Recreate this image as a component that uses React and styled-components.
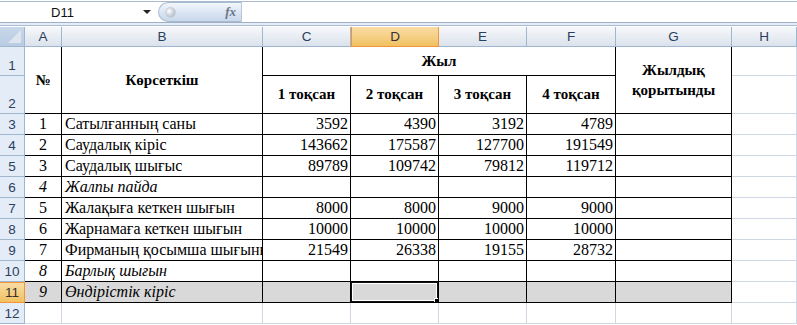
import React from "react";
import styled, { createGlobalStyle, css } from "styled-components";

const GlobalStyle = createGlobalStyle`
  html, body {
    margin: 0;
    padding: 0;
    background: #fff;
    overflow: hidden;
  }
  body {
    font-family: "Liberation Serif", "Times New Roman", serif;
  }
`;

const COLS = ["A", "B", "C", "D", "E", "F", "G", "H"];
const SELECTED_COL = "D";
const SELECTED_ROW = 11;

const ROWS = [
  { n: 1, no: "1", name: "Сатылғанның саны", v: [3592, 4390, 3192, 4789] },
  { n: 2, no: "2", name: "Саудалық кіріс", v: [143662, 175587, 127700, 191549] },
  { n: 3, no: "3", name: "Саудалық шығыс", v: [89789, 109742, 79812, 119712] },
  { n: 4, no: "4", name: "Жалпы пайда", italic: true },
  { n: 5, no: "5", name: "Жалақыға кеткен шығын", v: [8000, 8000, 9000, 9000] },
  { n: 6, no: "6", name: "Жарнамаға кеткен шығын", v: [10000, 10000, 10000, 10000] },
  { n: 7, no: "7", name: "Фирманың қосымша шығыны", v: [21549, 26338, 19155, 28732] },
  { n: 8, no: "8", name: "Барлық шығын", italic: true },
  { n: 9, no: "9", name: "Өндірістік кіріс", italic: true, fill: true },
];

const Page = styled.div`
  width: 797px;
  height: 325px;
  overflow: hidden;
  padding-top: 1px;
  box-sizing: border-box;
`;

const FormulaBar = styled.div`
  display: flex;
  height: 22px;
  border-top: 1px solid #a9bbd1;
  border-bottom: 1px solid #9cb0c9;
  box-sizing: border-box;
  background: #fff;
`;

const NameBox = styled.div`
  width: 158px;
  display: flex;
  align-items: center;
  font-family: "Liberation Sans", Arial, sans-serif;
  font-size: 13px;
  color: #111;
`;

const NameText = styled.span`
  flex: 1;
  text-align: center;
  padding-right: 18px;
`;

const DropArrow = styled.span`
  width: 0;
  height: 0;
  border-left: 4px solid transparent;
  border-right: 4px solid transparent;
  border-top: 4px solid #222;
  margin-right: 7px;
`;

const FxPill = styled.div`
  width: 84px;
  display: flex;
  align-items: center;
  justify-content: space-between;
  border-radius: 11px 0 0 11px;
  border: 1px solid #a9bccf;
  border-right: 1px solid #b9c8d9;
  background: linear-gradient(#f3f7fc, #d9e4f2 55%, #cad8eb);
  box-sizing: border-box;
  padding: 0 5px 0 6px;
`;

const Knob = styled.span`
  width: 9px;
  height: 9px;
  border-radius: 50%;
  background: radial-gradient(circle at 35% 35%, #ffffff, #b8c2cc 70%);
  border: 1px solid #c7d0da;
`;

const Fx = styled.span`
  font-family: "Liberation Serif", serif;
  font-style: italic;
  font-weight: bold;
  font-size: 13px;
  color: #6a7585;
`;

const FormulaInput = styled.div`
  flex: 1;
  background: #fff;
`;

const Strip = styled.div`
  height: 2px;
  background: #e6edf6;
  border-bottom: 1px solid #a8bbd3;
  margin-bottom: 1px;
`;

const Sheet = styled.div`
  display: grid;
  grid-template-columns: 25px 37px 201px 88px 88px 88px 89px 116px 65px 1fr;
  grid-template-rows: 20px 29px 38px repeat(10, 21px);
`;

const headerBase = css`
  box-sizing: border-box;
  font-family: "Liberation Sans", Arial, sans-serif;
  font-size: 13.5px;
  color: #2b3f5c;
  display: flex;
  justify-content: center;
`;

const ColHeader = styled.div`
  ${headerBase}
  align-items: center;
  border-right: 1px solid #9eb6ce;
  border-bottom: 1px solid #9eb6ce;
  background: linear-gradient(#f6f8fb, #e6ebf2 60%, #dbe2ec);
  ${(p) =>
    p.$active &&
    css`
      background: linear-gradient(#f9dca5, #f5cd7f 60%, #f1c15f);
      border: 1px solid #f29536;
      border-top-width: 0;
      color: #333;
    `}
`;

const Corner = styled.div`
  box-sizing: border-box;
  position: relative;
  border-right: 1px solid #9eb6ce;
  border-bottom: 1px solid #9eb6ce;
  background: linear-gradient(#c8d7ea, #b9cce4);
  overflow: hidden;
`;

const CornerTriangle = styled.span`
  position: absolute;
  right: 3px;
  bottom: 3px;
  width: 0;
  height: 0;
  border-left: 13px solid transparent;
  border-bottom: 13px solid #dfe5ee;
`;

const RowHeader = styled.div`
  ${headerBase}
  align-items: flex-end;
  padding-bottom: 2px;
  border-right: 1px solid #9eb6ce;
  border-bottom: 1px solid #9eb6ce;
  background: #e4ecf7;
  grid-row: ${(p) => p.$row};
  ${(p) =>
    p.$active &&
    css`
      background: linear-gradient(#f9dca5, #f1c15f);
      border: 1px solid #f29536;
      border-left-width: 0;
      color: #333;
    `}
`;

const Cell = styled.div`
  box-sizing: border-box;
  position: relative;
  display: flex;
  align-items: ${(p) => (p.$middle ? "center" : "flex-end")};
  justify-content: ${(p) =>
    p.$align === "right" ? "flex-end" : p.$align === "left" ? "flex-start" : "center"};
  text-align: ${(p) => p.$align || "center"};
  padding: ${(p) =>
    p.$align === "left" ? "0 2px 1px 3px" : p.$align === "right" ? "0 2px 1px 2px" : "0 2px 1px"};
  font-size: ${(p) => (p.$bold ? "15px" : "16px")};
  line-height: 18px;
  color: #000;
  white-space: nowrap;
  overflow: hidden;
  font-weight: ${(p) => (p.$bold ? "bold" : "normal")};
  font-style: ${(p) => (p.$italic ? "italic" : "normal")};
  background: ${(p) => (p.$fill ? "#d9d9d9" : "#fff")};
  border-right: 1px solid ${(p) => (p.$table ? "#000" : "#d0d7e5")};
  border-bottom: 1px solid ${(p) => (p.$table ? "#000" : "#d0d7e5")};
  ${(p) => p.$col && css`grid-column: ${p.$col};`}
  ${(p) => p.$row && css`grid-row: ${p.$row};`}
`;

const Wrap = styled.span`
  white-space: normal;
  line-height: 20px;
`;

const Selection = styled.span`
  position: absolute;
  left: -1px;
  top: -1px;
  right: -1px;
  bottom: -1px;
  border: 2px solid #111;
  box-shadow: inset 0 0 0 1px #fff;
  pointer-events: none;
`;

const FillHandle = styled.span`
  position: absolute;
  right: -2px;
  bottom: -2px;
  width: 5px;
  height: 5px;
  background: #000;
  border: 1px solid #fff;
  box-sizing: border-box;
`;

const QUARTERS = ["1 тоқсан", "2 тоқсан", "3 тоқсан", "4 тоқсан"];

export default function App() {
  return (
    <Page>
      <GlobalStyle />
      <FormulaBar>
        <NameBox>
          <NameText>D11</NameText>
          <DropArrow />
        </NameBox>
        <FxPill>
          <Knob />
          <Fx>fx</Fx>
        </FxPill>
        <FormulaInput />
      </FormulaBar>
      <Strip />
      <Sheet>
        <Corner>
          <CornerTriangle />
        </Corner>
        {COLS.map((c) => (
          <ColHeader key={c} $active={c === SELECTED_COL}>
            {c}
          </ColHeader>
        ))}
        <ColHeader />

        {Array.from({ length: 12 }, (_, i) => (
          <RowHeader key={i} $row={i + 2} $active={i + 1 === SELECTED_ROW}>
            {i + 1}
          </RowHeader>
        ))}

        {/* header rows 1-2 */}
        <Cell $table $bold $middle $col="2" $row="2 / span 2">№</Cell>
        <Cell $table $bold $middle $col="3" $row="2 / span 2">Көрсеткіш</Cell>
        <Cell $table $bold $middle $col="4 / span 4" $row="2">Жыл</Cell>
        <Cell $table $bold $middle $col="8" $row="2 / span 2">
          <Wrap>
            Жылдық
            <br />
            қорытынды
          </Wrap>
        </Cell>
        <Cell $col="9" $row="2" />
        <Cell $col="10" $row="2" />
        {QUARTERS.map((q, i) => (
          <Cell key={q} $table $bold $middle $col={String(i + 4)} $row="3">
            {q}
          </Cell>
        ))}
        <Cell $col="9" $row="3" />
        <Cell $col="10" $row="3" />

        {ROWS.map((r) => (
          <React.Fragment key={r.n}>
            <Cell $table $italic={r.italic} $fill={r.fill}>{r.no}</Cell>
            <Cell $table $align="left" $italic={r.italic} $fill={r.fill}>
              {r.name}
            </Cell>
            {[0, 1, 2, 3].map((k) => (
              <Cell key={k} $table $align="right" $fill={r.fill}>
                {r.v ? r.v[k] : ""}
                {r.fill && k === 1 && (
                  <Selection>
                    <FillHandle />
                  </Selection>
                )}
              </Cell>
            ))}
            <Cell $table $fill={r.fill} />
            <Cell />
            <Cell />
          </React.Fragment>
        ))}

        {Array.from({ length: 9 }, (_, i) => (
          <Cell key={"e" + i} />
        ))}
      </Sheet>
    </Page>
  );
}
